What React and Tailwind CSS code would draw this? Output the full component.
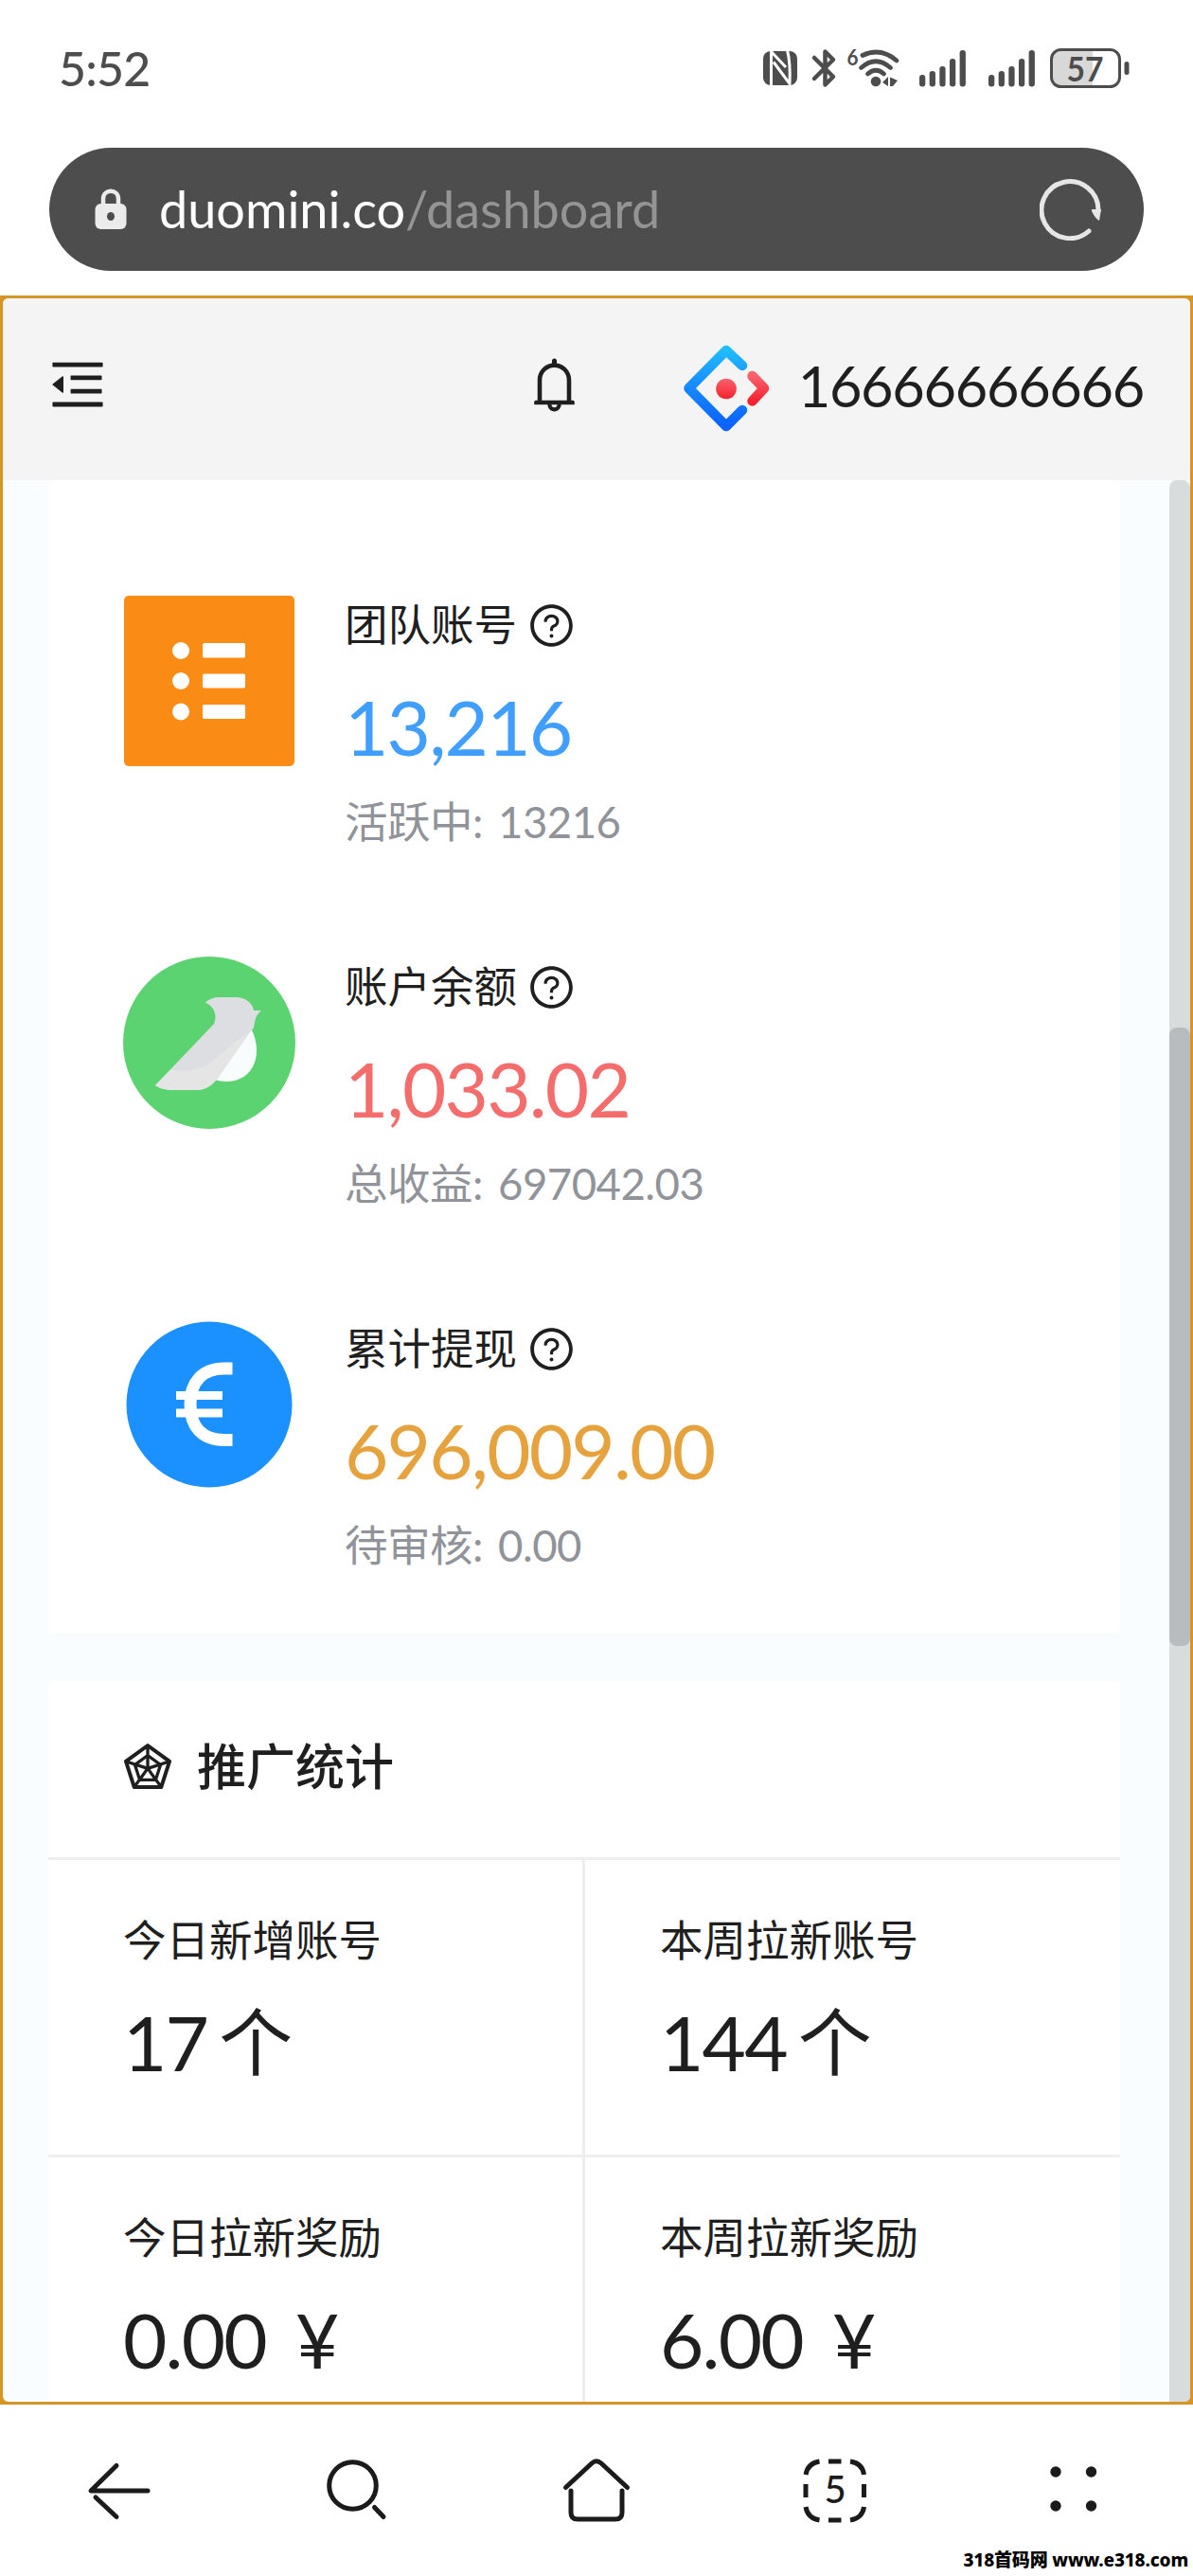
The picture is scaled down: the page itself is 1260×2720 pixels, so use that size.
import { AiOutlineBell, AiOutlineMenuFold, AiOutlineQuestionCircle, AiOutlineRadarChart } from "react-icons/ai";

const OrderIcon = () => (
  <svg viewBox="0 0 182 182" className="w-full h-full">
    <rect x="1" y="1" width="180" height="180" rx="5" fill="#fa8c16" />
    <g fill="#fff">
      <circle cx="61" cy="59" r="9" />
      <circle cx="61" cy="91" r="9" />
      <circle cx="61" cy="123.500" r="9" />
      <rect x="84" y="51" width="45" height="15.500" rx="1.500" />
      <rect x="84" y="83.500" width="45" height="15" rx="1.500" />
      <rect x="84" y="116" width="45" height="15" rx="1.500" />
    </g>
  </svg>
);

const BirdIcon = () => (
  <svg viewBox="0 0 182 182" className="w-full h-full">
    <circle cx="91" cy="91" r="91" fill="#5cd371" />
    <path d="M135 76C139 83 141 91 141 99C141 119 128 132 109 132C104 132 100 131 97 130Z" fill="#f8fcfd" />
    <path d="M86.500 48.500C91 45 96 43 101 43H120C129 43 137 49 138 57L146 57C142 60 140 64 139 69C138.500 73 138 77 134 80L103 124C96 135 88 141 77 141H54C45 141 38 139 34 136L96 71C99 64 98 53 86.500 48.500Z" fill="#dcdee1" />
    <path d="M51 119C66 123 84 120 98 108C112 96 122 86 134 80L103 124C96 135 88 141 77 141H54C45 141 38 139 34 136Z" fill="#e5e5e6" />
  </svg>
);

const EuroIcon = () => (
  <svg viewBox="0 0 182 182" className="w-full h-full">
    <circle cx="91" cy="91" r="87.500" fill="#1b90ff" />
    <g fill="none" stroke="#fff">
      <path d="M115.500 53H107C84 53 71 67 71 91S84 128.500 107 128.500H115.500" strokeWidth="13" />
      <path d="M56 81.500H105M56 100H105" strokeWidth="9" />
    </g>
  </svg>
);

const Logo = () => (
  <svg viewBox="0 0 92 92" className="w-[92px] h-[92px]">
    <defs>
      <linearGradient id="blue" x1="0" y1="0" x2="0" y2="1">
        <stop offset="0" stopColor="#1fbcff" />
        <stop offset="0.5" stopColor="#1787ff" />
        <stop offset="1" stopColor="#0b62ff" />
      </linearGradient>
      <linearGradient id="red" x1="0" y1="0" x2="0" y2="1">
        <stop offset="0" stopColor="#f8636e" />
        <stop offset="1" stopColor="#f5222f" />
      </linearGradient>
    </defs>
    <g fill="none" strokeWidth="10.500" strokeLinecap="round" strokeLinejoin="round">
      <path d="M63 22L46 6L6.500 46L46 86L63 69" stroke="url(#blue)" />
      <path d="M73.500 33L86 46L73.500 59.500" stroke="url(#red)" />
    </g>
    <circle cx="46" cy="46.500" r="10.800" fill="url(#red)" />
  </svg>
);

const signalTops = [79, 75, 70, 62, 53];

const StatusIcons = () => (
  <svg viewBox="800 45 400 55" className="w-[400px] h-[55px]" fill="#4d4d4d">
    {/* nfc */}
    <rect x="806" y="54" width="36" height="36" rx="8" />
    <path d="M814.500 91V54.500L830 71M817 65.500L834 88.500Q835 66 831.500 53" fill="none" stroke="#fff" strokeWidth="3" />
    {/* bluetooth */}
    <path d="M860 61L880 81L871.500 89.500V54.500L880 63L860 83" fill="none" stroke="#4d4d4d" strokeWidth="4.500" strokeLinecap="round" strokeLinejoin="round" />
    {/* wifi */}
    <text x="894.500" y="69" fontSize="23" fontWeight="700" fontFamily="Lato, sans-serif" textLength="12" lengthAdjust="spacingAndGlyphs">6</text>
    <g fill="none" stroke="#4d4d4d" strokeWidth="4.800" strokeLinecap="round">
      <path d="M911 58.500Q930 49.500 947 64" />
      <path d="M909.500 71.500Q925 58 940.500 71.500" />
      <path d="M916.500 78Q925 70.500 933.500 78" />
    </g>
    <circle cx="925" cy="86" r="5.300" />
    <path d="M932 87L938 81V91ZM940 81.500L948 85L943 91H940Z" />
    {/* both sim signals */}
    {[971, 1044].map((left) =>
      signalTops.map((top, i) => (
        <rect key={left + "-" + i} x={left + i * 10.650} y={top} width="6.300" height={91.500 - top} rx="3" />
      ))
    )}
    {/* battery */}
    <path d="M1120 54H1154V91H1120Q1111 91 1111 82V63Q1111 54 1120 54Z" fill="#d8d8d8" />
    <rect x="1110.500" y="52.500" width="72" height="39" rx="10" fill="none" stroke="#4d4d4d" strokeWidth="3" />
    <rect x="1187.500" y="65" width="5" height="14" rx="2.500" />
    <text x="1126.500" y="85.500" fontSize="36" fontWeight="700" fontFamily="Lato, sans-serif" textLength="39" lengthAdjust="spacingAndGlyphs">57</text>
  </svg>
);

const accounts = [
  { title: "团队账号", value: "13,216", note: "活跃中: 13216", color: "text-[#409eff]", icon: OrderIcon },
  { title: "账户余额", value: "1,033.02", note: "总收益: 697042.03", color: "text-[#f56c6c]", icon: BirdIcon },
  { title: "累计提现", value: "696,009.00", note: "待审核: 0.00", color: "text-[#e6a23c]", icon: EuroIcon },
];

const promotions = [
  { label: "今日新增账号", value: "17", unit: "个" },
  { label: "本周拉新账号", value: "144", unit: "个" },
  { label: "今日拉新奖励", value: "0.00", unit: "¥" },
  { label: "本周拉新奖励", value: "6.00", unit: "¥" },
];

const BrowserTop = () => (
  <div className="h-[312px] shrink-0 px-[52px]">
    <div className="flex justify-between pt-[45px] pl-2.5 pr-2">
      <span className="text-[50px] leading-[55px] font-medium tracking-[-0.8px] text-[#4d4d4d]">5:52</span>
      <StatusIcons />
    </div>
    <div className="mt-14 flex h-[130px] items-center rounded-full bg-[#4d4d4d] pl-12 pr-12">
      <svg viewBox="0 0 34 44" className="w-[34px] h-[44px]">
        <path d="M9 18V11C9 0 25 0 25 11V18" fill="none" stroke="#ebebeb" strokeWidth="4.500" />
        <rect x="0.500" y="16" width="33" height="27" rx="6" fill="#ebebeb" />
        <ellipse cx="17" cy="29.500" rx="4" ry="4.500" fill="#4d4d4d" />
      </svg>
      <span className="ml-[34px] text-[54px] leading-[60px] text-white">
        duomini.co<span className="text-[#949494]">/dashboard</span>
      </span>
      <svg viewBox="0 0 66 66" className="ml-auto -mr-1 w-[66px] h-[66px]">
        <path d="M52 56A30 30 0 1 1 62 34" fill="none" stroke="#e6e6e6" strokeWidth="5" strokeLinecap="round" />
        <path d="M55 33H65L63 45Q59 43 55 35Z" fill="#e6e6e6" />
      </svg>
    </div>
  </div>
);

const Account = ({ title, value, note, color, icon: Icon }) => (
  <div className="flex h-[382px]">
    <div className="mt-1 w-[182px] h-[182px]">
      <Icon />
    </div>
    <div className="ml-[52px]">
      <div className="mt-[3px] flex h-[66px] items-center text-[45.5px]">
        <span className="leading-[66px]">{title}</span>
        <AiOutlineQuestionCircle className="ml-[11px] text-[51px]" />
      </div>
      <div className={"mt-6 text-[80px] leading-[100px] tracking-[-1.8px] " + color}>{value}</div>
      <div className="mt-[18px] text-[45.5px] leading-[66px] tracking-[-0.5px] text-[#909399] [word-spacing:5px]">{note}</div>
    </div>
  </div>
);

const Promotion = ({ label, value, unit }) => (
  <div className="h-[314px] border-b-3 border-[#eeeeee] pl-[79px] odd:border-r-3">
    <div className="pt-[52px] text-[45.5px] leading-[66px]">{label}</div>
    <div className="mt-6 flex text-[80px] leading-[100px] tracking-[-1.8px]">
      <span>{value}</span>
      <span className={unit === "个" ? "ml-3 text-[78px]" : "ml-[31px]"}>{unit}</span>
    </div>
  </div>
);

const BrowserNav = () => (
  <div className="relative flex h-[181px] shrink-0 pt-[51px] text-[#1b1b1b]">
    <div className="flex flex-1 justify-center">
      <svg viewBox="0 0 80 80" className="w-20 h-20" fill="none" stroke="currentColor" strokeWidth="5" strokeLinecap="round">
        <path d="M37 13.500L10 40H70" strokeLinejoin="round" />
        <path d="M15 47L37 67.500" />
      </svg>
    </div>
    <div className="flex flex-1 justify-center">
      <svg viewBox="0 0 80 80" className="w-20 h-20" fill="none" stroke="currentColor" strokeWidth="5">
        <circle cx="34.500" cy="34.500" r="24.800" />
        <path d="M57.500 57.500L67 67.500" strokeLinecap="round" />
      </svg>
    </div>
    <div className="flex flex-1 justify-center">
      <svg viewBox="0 0 80 80" className="w-20 h-20" fill="none" stroke="currentColor" strokeWidth="5" strokeLinecap="round">
        <path d="M7.500 36.500L35 11Q40 6.500 45 11L72.500 36.500" />
        <path d="M13 40V63Q13 70 20 70H60Q67 70 67 63V40" />
      </svg>
    </div>
    <div className="flex flex-1 justify-center">
      <div className="relative w-20 h-20">
        <svg viewBox="0 0 80 80" className="w-20 h-20" fill="none" stroke="currentColor" strokeWidth="5">
          <path d="M9 23Q11 11 23.500 9M56 9Q69 11 70.500 23M70.500 57Q69 69 56 71M23.500 71Q11 69 9 57" />
          <path d="M33 9H46.500M33 71H46.500M9 33V47M70.500 33V47" />
        </svg>
        <span className="absolute inset-0 text-center text-[40px] leading-[76px] font-medium">5</span>
      </div>
    </div>
    <div className="flex flex-1 justify-center">
      <svg viewBox="0 0 80 80" className="w-20 h-20" fill="currentColor">
        <circle cx="21" cy="20" r="5.700" />
        <circle cx="58.500" cy="20" r="5.700" />
        <circle cx="21" cy="56" r="5.700" />
        <circle cx="58.500" cy="56" r="5.700" />
      </svg>
    </div>
    <div className="absolute right-[5px] bottom-[5px] font-['Noto_Sans','Noto_Sans_CJK_SC',sans-serif] text-[19px] leading-6 font-extrabold tracking-[-0.15px] whitespace-nowrap text-black">
      318首码网 www.e318.com
    </div>
  </div>
);

const App = () => {
  return (
    <div className="flex h-[2720px] w-[1260px] flex-col overflow-hidden bg-white font-[Lato,'Noto_Sans_CJK_SC',sans-serif] text-[#1f1f1f]">
      <BrowserTop />

      <div className="h-[2227px] shrink-0 bg-[#d69525] p-[3px]">
        <div className="flex h-full flex-col overflow-hidden rounded-md bg-[#f9fdff]">
          <header className="flex h-[192px] shrink-0 items-center bg-[#f4f4f4] pl-[45px] pr-[49px]">
            <AiOutlineMenuFold className="mt-[-10px] text-[68px]" />
            <AiOutlineBell className="mt-[-10px] ml-[437px] text-[65px]" />
            <div className="ml-auto flex items-center pb-[3px]">
              <Logo />
              <span className="mb-1.5 ml-[30px] text-[59.5px] leading-[80px] tracking-[-1.3px]">16666666666</span>
            </div>
          </header>

          <div className="flex min-h-0 flex-1">
            <main className="ml-12 w-[1132px] shrink-0">
              <section className="h-[1218px] rounded-b-md bg-white pl-[79px] pt-[117px]">
                {accounts.map((item) => (
                  <Account key={item.title} {...item} />
                ))}
              </section>

              <section className="mt-[50px] rounded-t-md bg-white">
                <div className="flex h-[189px] items-center border-b-3 border-[#eeeeee] pb-1.5 pl-[75px] font-medium">
                  <AiOutlineRadarChart className="text-[60px]" />
                  <h2 className="ml-[22px] text-[52px] leading-[70px]">推广统计</h2>
                </div>
                <div className="grid grid-cols-[567px_565px]">
                  {promotions.map((item) => (
                    <Promotion key={item.label} {...item} />
                  ))}
                </div>
              </section>
            </main>

            <div className="ml-auto w-[22px] rounded-t-lg bg-[#d8dcdc] pt-[578px]">
              <div className="h-[653px] rounded-lg bg-[#b8bcbf]" />
            </div>
          </div>
        </div>
      </div>

      <BrowserNav />
    </div>
  );
};

export default App;
